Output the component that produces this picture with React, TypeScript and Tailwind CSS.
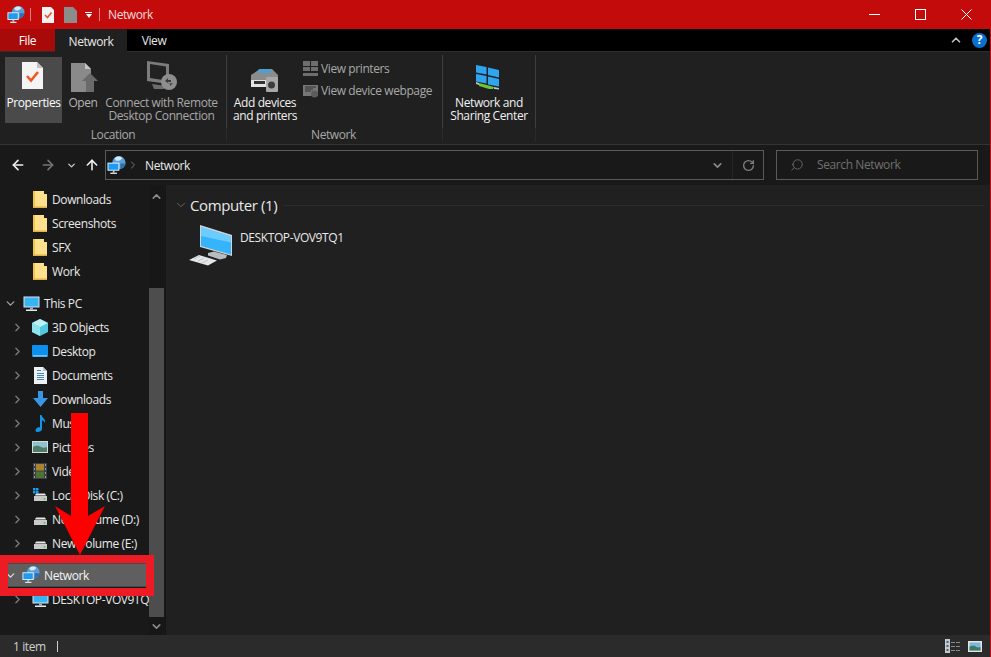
import React from 'react'
import { ChevronRight, ChevronDown, ChevronUp, ArrowLeft, ArrowRight, ArrowUp, RotateCw, Search } from 'lucide-react'

const uiFont = "[font-family:'Open_Sans','Noto_Sans',sans-serif] tracking-[-0.4px]"

const GlobeIcon = ({ size = 20 }: { size?: number }) => (
  <svg width={size} height={size} viewBox="0 0 20 20">
    <circle cx="12.5" cy="7" r="7" fill="#5a9fd8" />
    <path d="M8 2.500c2-2.500 6-2.500 8-.5-1 2.500-4 3.500-6.500 3z" fill="#d5e8f6" />
    <path d="M14 8c2 0 4 0 5.500.5-.5 2.500-3 5-5.500 5z" fill="#2d6fb0" />
    <rect x="0.500" y="7" width="12.500" height="8.500" fill="#e6f3fb" />
    <rect x="1.500" y="8" width="10.500" height="6.500" fill="#1e9bf0" />
    <rect x="6" y="15.500" width="2" height="2" fill="#a9c4d6" />
    <rect x="3.500" y="17.500" width="7" height="1.400" fill="#d8e6ef" />
  </svg>
)

const MonitorIcon = () => (
  <svg width="17" height="17" viewBox="0 0 17 17">
    <rect x="0.500" y="1.500" width="16" height="11" fill="#d9e7ee" />
    <rect x="1.500" y="2.500" width="14" height="9" fill="#38b4f2" />
    <rect x="7" y="12.500" width="3" height="2" fill="#9fb4c0" />
    <rect x="3" y="14.500" width="11" height="1.500" fill="#dfe9ef" />
  </svg>
)

const FolderIcon = () => (
  <svg width="14" height="17" viewBox="0 0 14 17">
    <path d="M0 0h11v3h3v14H0z" fill="#ffe08c" />
    <path d="M11 0v3h3z" fill="#1a1a1a" />
    <path d="M0 0h2v17H0z" fill="#f4c542" />
    <path d="M0 15.500h14V17H0z" fill="#e3b23c" />
  </svg>
)

const CubeIcon = () => (
  <svg width="18" height="17" viewBox="0 0 18 17">
    <path d="M9 0l8 4v9l-8 4-8-4V4z" fill="#52c7de" />
    <path d="M9 0l8 4-8 4-8-4z" fill="#bdf0f5" />
    <path d="M1 4l8 4v9l-8-4z" fill="#8fe3ea" />
  </svg>
)

const DesktopIcon = () => (
  <svg width="16" height="12" viewBox="0 0 16 12">
    <rect width="16" height="12" rx="1" fill="#0d8fee" />
    <rect x="1" y="10.400" width="14" height="1" fill="#b9e0fb" />
  </svg>
)

const DocumentsIcon = () => (
  <svg width="13" height="17" viewBox="0 0 13 17">
    <path d="M0 0h9l4 4v13H0z" fill="#eef1f3" />
    <path d="M3 3h4v1H3zM3 6h7v1H3zM3 8h7v1H3zM3 10h7v1H3zM3 12h7v1H3z" fill="#4a86b8" />
    <path d="M9 0v4h4z" fill="#b7c2ca" />
  </svg>
)

const DownloadIcon = () => (
  <svg width="15" height="16" viewBox="0 0 15 16">
    <path d="M5 0h5v7h5l-7.500 9L0 7h5z" fill="#3a95e4" />
  </svg>
)

const MusicIcon = () => (
  <svg width="11" height="17" viewBox="0 0 11 17">
    <path d="M5 0h1.500c.5 3 4.500 4 3.500 8-1-2-2-2.500-3-2.500V14c0 2-2.500 3-4.500 3S0 15.500 1 14c1-1.500 3-2 4-1.500z" fill="#1296ea" />
  </svg>
)

const PicturesIcon = () => (
  <svg width="16" height="12" viewBox="0 0 16 12">
    <rect width="16" height="12" fill="#d9dcdd" />
    <rect x="1" y="1" width="14" height="10" fill="#8fc2cf" />
    <path d="M1 6c3-2 6-1 8 0s4 1 6 0v5H1z" fill="#4f7d6c" />
  </svg>
)

const VideosIcon = () => (
  <svg width="14" height="16" viewBox="0 0 14 16">
    <rect width="14" height="16" fill="#3b4046" />
    <rect x="3" y="1" width="8" height="6.500" fill="#a9832f" />
    <rect x="3" y="8.500" width="8" height="6.500" fill="#4d7435" />
    <path d="M1 1h1v2H1zM1 5h1v2H1zM1 9h1v2H1zM1 13h1v2H1zM12 1h1v2h-1zM12 5h1v2h-1zM12 9h1v2h-1zM12 13h1v2h-1z" fill="#9aa0a6" />
  </svg>
)

const DriveIcon = ({ windows = false }: { windows?: boolean }) => (
  <svg width="15" height="14" viewBox="0 0 15 14">
    {windows && <path d="M0 0h2.500v2.500H0zM3 0h2.500v2.500H3zM0 3h2.500v2.500H0zM3 3h2.500v2.500H3z" fill="#18a0f0" />}
    <path d="M2 7.500c.5-1.500 1-2 2-2h7c1 0 1.500.5 2 2z" fill="#e8e8e8" />
    <rect x="1" y="8" width="13" height="5" fill="#c9c9c9" />
    <rect x="10.500" y="10" width="2" height="1.500" fill="#43d05c" />
  </svg>
)

const navTop = ['Downloads', 'Screenshots', 'SFX', 'Work']

const navPc: { label: string; icon: React.ReactNode }[] = [
  { label: '3D Objects', icon: <CubeIcon /> },
  { label: 'Desktop', icon: <DesktopIcon /> },
  { label: 'Documents', icon: <DocumentsIcon /> },
  { label: 'Downloads', icon: <DownloadIcon /> },
  { label: 'Music', icon: <MusicIcon /> },
  { label: 'Pictures', icon: <PicturesIcon /> },
  { label: 'Videos', icon: <VideosIcon /> },
  { label: 'Local Disk (C:)', icon: <DriveIcon windows /> },
  { label: 'New Volume (D:)', icon: <DriveIcon /> },
  { label: 'New Volume (E:)', icon: <DriveIcon /> },
]

const TreeRow = ({ icon, label }: { icon: React.ReactNode; label: string }) => (
  <div className="flex h-6 items-center whitespace-nowrap">
    <div className="flex w-[31px] shrink-0 justify-end pr-[7px]">
      <ChevronRight className="h-[13px] w-[13px] text-[#7a7a7a]" strokeWidth={2.5} />
    </div>
    <div className="flex w-[21px] shrink-0 justify-center pr-[3px]">{icon}</div>
    <span className="pt-[2px] text-[12px] text-[#e8e8e8]">{label}</span>
  </div>
)

const RibbonButton = ({ icon, text, className }: { icon: React.ReactNode; text: string; className: string }) => (
  <div className={`flex h-[66px] shrink-0 flex-col items-center pt-[5px] text-[12px] ${className}`}>
    <div className="flex h-[34px] items-start justify-center">{icon}</div>
    <span className="whitespace-pre text-center leading-[13px]">{text}</span>
  </div>
)

const Divider = () => (
  <div className="flex w-px shrink-0 flex-col">
    <div className="h-[73px] bg-[#3e3e3e]" />
    <div className="h-[14px] bg-[#2a2a2a]" />
  </div>
)

export default function App() {
  return (
    <div className={`relative flex h-[657px] w-[991px] flex-col overflow-hidden border-r border-[#c40b0b] bg-[#202020] ${uiFont}`}>
      {/* Title bar */}
      <div className="flex h-[29px] shrink-0 items-center bg-[#c40b0b] text-white">
        <div className="ml-[7px]"><GlobeIcon size={18} /></div>
        <div className="ml-[5px] h-[13px] w-px bg-[#e88080]" />
        <div className="ml-[11px]">
          <svg width="12" height="16" viewBox="0 0 12 16">
            <path d="M0 0h9l3 3v13H0z" fill="#f2f2f2" />
            <path d="M3 8l2.500 2.500L9.500 5.500" fill="none" stroke="#e8531f" strokeWidth="1.600" />
          </svg>
        </div>
        <div className="ml-[10px]">
          <svg width="13" height="16" viewBox="0 0 13 16">
            <path d="M0 0h9l4 4v12H0z" fill="#8c8c8c" />
          </svg>
        </div>
        <div className="ml-[8px] flex flex-col items-center gap-[1px]">
          <div className="h-px w-[7px] bg-white" />
          <div className="h-0 w-0 border-x-[3.500px] border-t-[4px] border-x-transparent border-t-white" />
        </div>
        <div className="ml-[7px] h-[13px] w-px bg-[#e88080]" />
        <span className="ml-[8px] text-[12px] text-[#f6dcdc]">Network</span>
        <div className="ml-auto flex h-full">
          <div className="flex w-[46px] items-center justify-center">
            <svg width="11" height="11" viewBox="0 0 11 11"><path d="M0 5.500h11" stroke="#ffffff" /></svg>
          </div>
          <div className="flex w-[46px] items-center justify-center">
            <svg width="11" height="11" viewBox="0 0 11 11"><rect x="0.500" y="0.500" width="10" height="10" fill="none" stroke="#ffffff" /></svg>
          </div>
          <div className="mr-px flex w-[46px] items-center justify-center">
            <svg width="11" height="11" viewBox="0 0 11 11"><path d="M0.500 0.500l10 10M10.500 0.500l-10 10" stroke="#ffffff" /></svg>
          </div>
        </div>
      </div>

      {/* Tabs */}
      <div className="flex h-[23px] shrink-0 items-stretch border-b border-[#2e2e2e] bg-black text-[12px] text-[#e6e6e6]">
        <div className="flex w-[55px] items-center justify-center bg-[#a80a0a] pt-[2px] text-white">File</div>
        <div className="-mb-px flex w-[72px] items-center justify-center bg-[#202020] pt-[2px]">Network</div>
        <div className="flex w-[54px] items-center justify-center pt-[2px]">View</div>
        <div className="ml-auto flex items-center gap-[9px] pr-[3px]">
          <ChevronUp className="h-[14px] w-[14px] text-[#bdbdbd]" strokeWidth={3} />
          <div className="flex h-[15px] w-[15px] items-center justify-center rounded-full bg-[#0b6fd0] text-[12px] font-bold leading-none text-white">?</div>
        </div>
      </div>

      {/* Ribbon */}
      <div className="flex h-[93px] shrink-0 border-b border-[#333333] bg-[#202020] pt-[3px] text-[#e8e8e8]">
        <div className="flex w-[226px] shrink-0 flex-col">
          <div className="flex h-[70px] items-start pl-[5px] pt-[2px]">
            <RibbonButton
              className="w-[57px] bg-[#4a4a4a] text-white"
              text="Properties"
              icon={
                <svg width="21" height="27" viewBox="0 0 21 27" className="-ml-[2px]">
                  <path d="M0 0h15l6 6v21H0z" fill="#f4f4f4" />
                  <path d="M15 0v6h6z" fill="#c2c2c2" />
                  <path d="M5 14l4 4.500 7-8.500" fill="none" stroke="#f0571f" strokeWidth="2.500" />
                </svg>
              }
            />
            <RibbonButton
              className="ml-[2px] w-[38px] text-[#b4b4b4]"
              text="Open"
              icon={
                <svg width="27" height="30" viewBox="0 0 27 30" className="ml-[2px]">
                  <path d="M0 1h14l6 6v23H0z" fill="#8a8a8a" />
                  <path d="M14 1v6h6z" fill="#c4c4c4" />
                  <path d="M11 19l8-8 8 8h-4v11h-8V19z" fill="#6a6a6a" />
                </svg>
              }
            />
            <RibbonButton
              className="ml-[4px] w-[111px] text-[#a8a8a8]"
              text={'Connect with Remote\nDesktop Connection'}
              icon={
                <svg width="32" height="31" viewBox="0 0 32 31" className="-mt-[1px]">
                  <path d="M1 0l22 3v20L1 20z" fill="#7c7c7c" />
                  <path d="M4 3l16 2.500v14L4 17z" fill="#222222" />
                  <path d="M6 23l14 2-2 3H8z" fill="#6d6d6d" />
                  <circle cx="23" cy="21" r="8" fill="#8e8e8e" />
                  <path d="M19 20l3-3v2h3v2h-3v1zM27 22l-3 3v-2h-3" fill="#3a3a3a" />
                </svg>
              }
            />
          </div>
          <div className="flex h-[17px] items-center justify-center pt-[2px] text-[12px] text-[#a8a8a8]">Location</div>
        </div>
        <Divider />

        <div className="flex w-[215px] shrink-0 flex-col">
          <div className="flex h-[70px] items-start pl-[5px] pt-[2px]">
            <RibbonButton
              className="w-[66px] text-[#f0f0f0]"
              text={'Add devices\nand printers'}
              icon={
                <svg width="29" height="27" viewBox="0 0 29 27" className="mt-[4px] -ml-[2px]">
                  <path d="M1 9l9-6h12l6 6v5H1z" fill="#8c8c8c" />
                  <path d="M9 3h11l2 4H7z" fill="#4fa0d0" />
                  <rect x="1" y="14" width="22" height="7" fill="#e2e2e2" />
                  <rect x="4" y="15" width="11" height="3" fill="#333333" />
                  <rect x="16" y="11" width="12" height="15" rx="1" fill="#a8a8a8" />
                  <circle cx="21.500" cy="19" r="3.500" fill="#3c3c3c" />
                </svg>
              }
            />
            <div className="ml-[5px] flex flex-col gap-[6px] pt-[4px] text-[12px] text-[#a8a8a8]">
              <div className="flex h-[16px] items-center gap-[3px] whitespace-nowrap">
                <svg width="15" height="16" viewBox="0 0 15 16">
                  <path d="M0 0h7v5H0zM8 0h7v5H8zM0 6h7v4H0zM8 6h7v4H8zM0 12h15v3H0z" fill="#6e6e6e" />
                </svg>
                View printers
              </div>
              <div className="flex h-[16px] items-center gap-[3px] whitespace-nowrap">
                <svg width="15" height="13" viewBox="0 0 15 13">
                  <rect width="15" height="11" fill="#777777" />
                  <path d="M2 2h11M2 4h8M2 6h6" stroke="#333333" />
                  <circle cx="11.500" cy="9" r="3.500" fill="#5c5c5c" />
                </svg>
                View device webpage
              </div>
            </div>
          </div>
          <div className="flex h-[17px] items-center justify-center pt-[2px] pr-[2px] text-[12px] text-[#a8a8a8]">Network</div>
        </div>
        <Divider />

        <div className="flex w-[92px] shrink-0 flex-col">
          <div className="flex h-[70px] justify-center pt-[2px]">
            <RibbonButton
              className="w-[86px] text-[#f0f0f0]"
              text={'Network and\nSharing Center'}
              icon={
                <svg width="25" height="27" viewBox="0 0 25 27" className="mt-[2px] -ml-[3px]">
                  <path d="M1 1l10.500 2v7.500L1 8.500zM13 3.500l11 2.500v7.500l-11-2.500zM1 10l10.500 2v7.500L1 17.500zM13 12.500l11 2.500v7.500L13 20.500z" fill="#2fa5ef" />
                  <path d="M4 19l6 1.500 9 2.500-1 2-4 0-10-3z" fill="#69c83a" />
                  <path d="M1 18l3 1 0 2-3-1zM19 23l5 1 0 1.500-5-.5z" fill="#b8c4cc" />
                </svg>
              }
            />
          </div>
        </div>
        <Divider />
      </div>

      {/* Address row */}
      <div className="flex h-[40px] shrink-0 items-center bg-[#191919]">
        <div className="flex w-[105px] shrink-0 items-center">
          <ArrowLeft className="ml-[10px] h-[16px] w-[16px] text-[#f0f0f0]" strokeWidth={2.4} />
          <ArrowRight className="ml-[14px] h-[16px] w-[16px] text-[#757575]" strokeWidth={2.4} />
          <ChevronDown className="ml-[10px] h-[11px] w-[11px] text-[#c8c8c8]" strokeWidth={3} />
          <ArrowUp className="ml-[7px] h-[16px] w-[16px] text-[#f0f0f0]" strokeWidth={2.4} />
        </div>
        <div className="flex h-[30px] w-[659px] shrink-0 items-center border border-[#5a5a5a] bg-[#191919]">
          <div className="ml-[1px]"><GlobeIcon size={19} /></div>
          <ChevronRight className="ml-[1px] h-[12px] w-[12px] text-[#777777]" strokeWidth={2} />
          <span className="ml-[6px] pt-[2px] text-[12px] text-[#e8e8e8]">Network</span>
          <ChevronDown className="ml-auto mr-[8px] h-[13px] w-[13px] text-[#8a8a8a]" strokeWidth={3} />
          <div className="h-full w-px bg-[#262626]" />
          <div className="flex w-[30px] justify-center"><RotateCw className="h-[13px] w-[13px] text-[#7c7c7c]" strokeWidth={2.5} /></div>
        </div>
        <div className="ml-[12px] flex h-[30px] w-[202px] shrink-0 items-center border border-[#5a5a5a] bg-[#191919]">
          <Search className="ml-[13px] h-[14px] w-[14px] -scale-x-100 text-[#6e6e6e]" strokeWidth={1.5} />
          <span className="ml-[13px] text-[12px] text-[#707070]">Search Network</span>
        </div>
      </div>

      {/* Body */}
      <div className="flex min-h-0 flex-1">
        <div className="flex w-[166px] shrink-0 border-r border-[#151515] bg-[#191919]">
          <div className="w-[149px] shrink-0 overflow-hidden pt-[2px]">
            {navTop.map((n) => (
              <div key={n} className="flex h-6 items-center pl-[33px]">
                <div className="flex w-[19px] shrink-0"><FolderIcon /></div>
                <span className="pt-[2px] text-[12px] text-[#e8e8e8]">{n}</span>
              </div>
            ))}
            <div className="mt-[8px] flex h-6 items-center pl-[4px]">
              <ChevronDown className="h-[13px] w-[13px] text-[#a0a0a0]" strokeWidth={2.5} />
              <div className="ml-[6px] w-[21px] shrink-0"><MonitorIcon /></div>
              <span className="pt-[2px] text-[12px] text-[#e8e8e8]">This PC</span>
            </div>
            {navPc.map((n) => (
              <TreeRow key={n.label} icon={n.icon} label={n.label} />
            ))}
            <div className="mt-[8px] flex h-6 items-center border-y border-[#484848] bg-[#5f5f5f] pl-[4px]">
              <ChevronDown className="h-[13px] w-[13px] text-[#d8d8d8]" strokeWidth={2.5} />
              <div className="ml-[5px] w-[22px] shrink-0"><GlobeIcon size={18} /></div>
              <span className="pt-[2px] text-[12px] text-[#f4f4f4]">Network</span>
            </div>
            <TreeRow icon={<MonitorIcon />} label="DESKTOP-VOV9TQ1" />
          </div>
          <div className="flex w-[15px] shrink-0 flex-col items-center bg-[#171717]">
            <div className="flex h-[103px] w-full justify-center pt-[5px]">
              <ChevronUp className="h-[13px] w-[13px] text-[#8a8a8a]" strokeWidth={3} />
            </div>
            <div className="h-[329px] w-full bg-[#4d4d4d]" />
            <div className="flex flex-1 items-center justify-center">
              <ChevronDown className="h-[13px] w-[13px] text-[#8a8a8a]" strokeWidth={3} />
            </div>
          </div>
        </div>

        <div className="min-w-0 flex-1 bg-[#202020] pl-[8px] pr-[5px] pt-[9px]">
          <div className="flex h-[22px] items-center">
            <ChevronDown className="h-[14px] w-[14px] text-[#6e6e6e]" strokeWidth={1.5} />
            <span className="ml-[2px] text-[15px] text-[#e8e8e8]">Computer (1)</span>
            <div className="ml-[7px] h-px flex-1 bg-[#2c2c2c]" />
          </div>
          <div className="mt-[9px] flex items-start pl-[15px]">
            <svg width="44" height="42" viewBox="0 0 44 42" className="shrink-0">
              <path d="M11 0l32 10v21L11 22z" fill="#cfd6da" />
              <path d="M12 2l30 9.500v18L12 21z" fill="#35b3fb" />
              <path d="M12 2l30 9.500v6L12 11z" fill="#6ccbff" />
              <path d="M19 28l6-1.500 13 3.500-1 3-6 1.500-12-4z" fill="#b8bcbf" />
              <path d="M0 35l10-5 18 5.500-9 5z" fill="#e4e6e8" />
              <path d="M5 34l6-3M9 36l6-3M13 38l6-3" stroke="#a8acaf" strokeWidth="0.600" />
            </svg>
            <span className="ml-[7px] mt-[4px] text-[12px] text-[#e8e8e8]">DESKTOP-VOV9TQ1</span>
          </div>
        </div>
      </div>

      {/* Status bar */}
      <div className="flex h-[22px] shrink-0 items-center bg-[#2b2b2b] text-[12px] text-[#d0d0d0]">
        <span className="ml-[13px] pt-[2px]">1 item</span>
        <div className="ml-[11px] h-[11px] w-px bg-[#d0d0d0]" />
        <div className="ml-auto mr-[8px] flex items-center gap-[8px]">
          <svg width="15" height="14" viewBox="0 0 15 14">
            <rect x="0" y="0" width="5" height="14" fill="#c8c8c8" />
            <path d="M1.500 2h2v2h-2zM1.500 6h2v2h-2zM1.500 10h2v2h-2z" fill="#39659a" />
            <path d="M6 3h4v1H6zM11 3h4v1h-4zM6 7h4v1H6zM11 7h4v1h-4zM6 11h4v1H6zM11 11h4v1h-4z" fill="#8a8a8a" />
          </svg>
          <svg width="14" height="11" viewBox="0 0 14 11">
            <rect width="14" height="11" fill="#e4e4e4" />
            <rect x="1.500" y="1.500" width="11" height="8" fill="#7fb6d6" />
            <path d="M1.500 6c3-2 5-1 7 0s3 0 4 0v3.500h-11z" fill="#3c7a68" />
          </svg>
        </div>
      </div>

      {/* Annotation over the nav pane */}
      <div className="absolute left-0 top-[555px] h-[41px] w-[154px] border-[8px] border-[#ed1c24]" />
      <svg className="absolute left-0 top-0" width="160" height="657" viewBox="0 0 160 657">
        <polygon points="71,413 88,413 88,516 105,506 80,555 55,506 71,516" fill="#ff0000" />
      </svg>
    </div>
  )
}
